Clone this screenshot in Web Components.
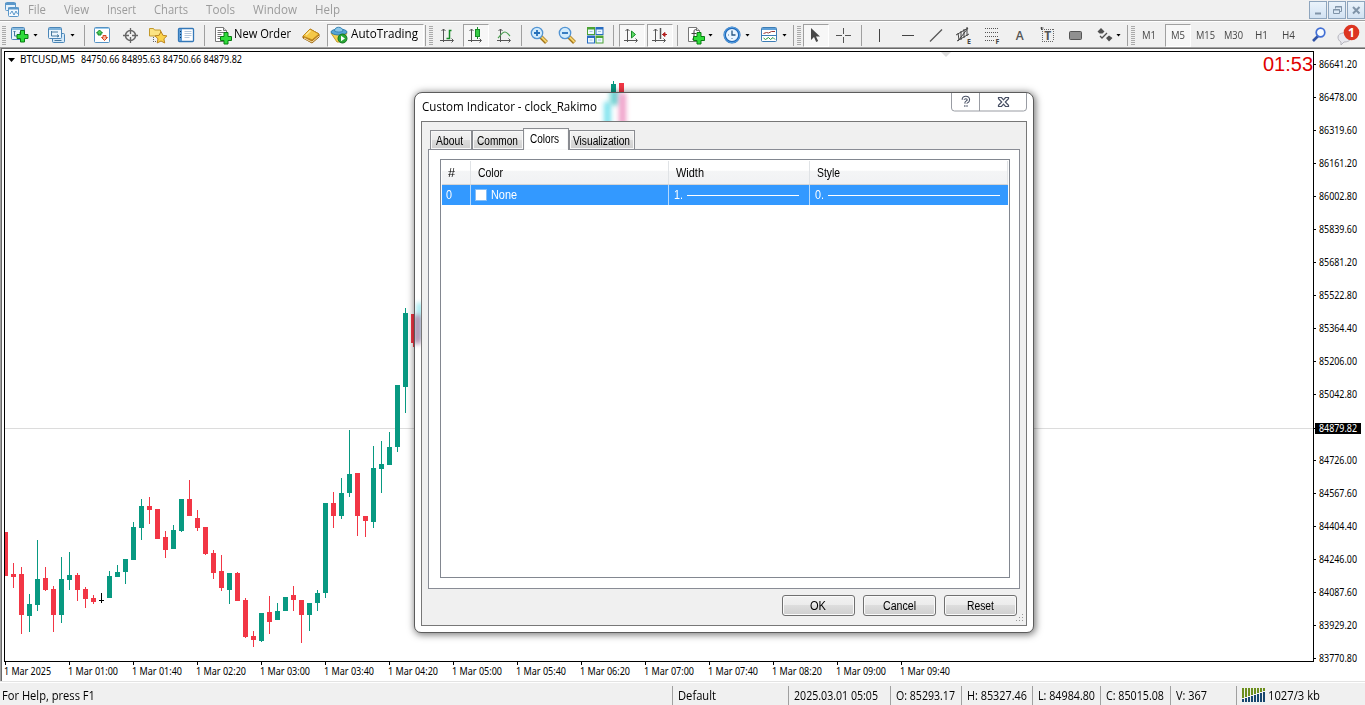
<!DOCTYPE html>
<html lang="en">
<head>
<meta charset="utf-8">
<title>BTCUSD,M5</title>
<style>
    html, body { margin: 0; height: 100%; overflow: hidden; }
    body { background: #f0f0f0; }
</style>
</head>
<body>
<trade-terminal></trade-terminal>

<script>
const UI = '"Open Sans", "Noto Sans", sans-serif';

const ADD = '<path d="M10.5 6.500h4v4h3.500v4h-3.500v3.500h-4v-3.500h-3.500v-4h3.500z" fill="#2fdc3a" stroke="#087c12" transform="translate(-.5 0)"/>';
const AXES = '<path d="M4.500 3v13M1 14.500h13M2.500 5l2-2 2 2M12.500 12.500l2 2-2 2" fill="none" stroke="#555"/>';
const PAGE = '<path d="M1.500 1.500h8l3 3v11h-11z" fill="#fff" stroke="#777"/><path d="M9.500 1.500v3h3" fill="#ddd" stroke="#777"/>';

const ICONS = {
    app: '<rect x="1.500" y="1.500" width="10" height="8" rx="1" fill="#e6f2fb" stroke="#5b97c9"/><path d="M1 3h11" stroke="#5b97c9" stroke-width="2"/><rect x="4.500" y="6.500" width="10" height="9" rx="1" fill="#f4faff" stroke="#5b97c9"/><path d="M4 7.500h11" stroke="#5b97c9" stroke-width="2"/><path d="M6 13l2-3 2 4 2-4 1.500 3" fill="none" stroke="#5b97c9"/>',
    chartAdd: '<rect x=".5" y="1.500" width="13" height="12" rx="1" fill="#eaf5fd" stroke="#4b86b8"/><path d="M1 3h12" stroke="#8abce0" stroke-width="2"/><path d="M3.500 5v5h7M2.500 6l1-1 1 1M9 6v3" fill="none" stroke="#44789f"/><g transform="translate(-.5 -2)">' + ADD + '</g>',
    profiles: '<rect x="4.500" y="7.500" width="12" height="9" rx="1" fill="#d5e9f8" stroke="#4b86b8"/><rect x=".5" y="1.500" width="13" height="11" rx="1" fill="#eaf5fd" stroke="#4b86b8"/><path d="M1 3h12" stroke="#7db2db" stroke-width="2"/><path d="M3.500 5v5h7M9 8.500l2 1.500-2 1M4 6h6M6.500 14.500h7" fill="none" stroke="#44789f"/>',
    market: '<rect x="1.500" y="1.500" width="15" height="15" rx="1" fill="#fff" stroke="#5592c4"/><path d="M2 2.500h14" stroke="#9acbed"/><path d="M6.500 4l3 3h-1.500v2h-3v-2h-1.500z" fill="#4cd05c" stroke="#16862a"/><path d="M11.500 14.500l-3-3h1.500v-2h3v2h1.500z" fill="#f9b49b" stroke="#d34720"/>',
    cross: '<circle cx="8.500" cy="9.500" r="5" fill="none" stroke="#666" stroke-width="1.500"/><path d="M8.500 2v6M8.500 11v6M1 9.500h6M10 9.500h6" stroke="#666" stroke-width="1.300"/>',
    folder: '<path d="M.5 2.500h4l1 1.500h6v6h-11z" fill="#fbe384" stroke="#c39a2c"/><path d="M4.500 11v6M6 15.500h3" stroke="#666" stroke-dasharray="1 1"/><path d="M12 5.500l1.900 3.800 4 .6-3 2.900.8 4.200-3.700-2-3.800 2 .8-4.200-3-2.900 4.100-.6z" fill="#fbd34b" stroke="#bd8621"/>',
    terminal: '<rect x="1.500" y="2.500" width="15" height="13" rx="1" fill="#fff" stroke="#3478b8" stroke-width="1.300"/><path d="M3.500 3v12" stroke="#5b9bd6" stroke-width="3"/><path d="M3 5.500h1M3 8.500h1M3 11.500h1" stroke="#0b355f"/><path d="M7.500 5.500h7M7.500 7.500h7M7.500 9.500h7M7.500 11.500h5" stroke="#b4c7da"/>',
    order: PAGE + '<path d="M3.500 4.500h4M3.500 6.500h7M3.500 8.500h4M3.500 10.500h3M3.500 12.500h3" stroke="#777"/>' + ADD,
    book: '<path d="M1 10l7-7c3 2 6 3 9 5v3l-7 6c-3-2-6-3-9-5z" fill="#b87812" stroke="#9b640e"/><path d="M1 10l7-7c3 2 6 3 9 5l-7 6c-3-2-6-2-9-4z" fill="#f5c847" stroke="#c28b1d"/><path d="M4 9l4.500-4.500" stroke="#ffe99b" stroke-width="1.500"/><path d="M2 12l8 4 7-6" fill="none" stroke="#f6e3ab"/>',
    auto: '<path d="M1 7l6 9h4l6-9z" fill="#f6d251" stroke="#c3992b"/><ellipse cx="9" cy="6" rx="8" ry="3" fill="#57a5d5" stroke="#2f7cad"/><path d="M4.500 5c0-5 8-5 8.500 0-2 1.500-6 1.500-8.500 0z" fill="#8bc8ea" stroke="#3985b4"/><circle cx="12.500" cy="12.500" r="4.500" fill="#28a634" stroke="#127320"/><path d="M11 9.800v5.400l4-2.700z" fill="#fff"/>',
    bars: AXES + '<path d="M7.500 12.500h3v-8h2" fill="none" stroke="#178b27" stroke-width="1.500"/>',
    candle: AXES + '<path d="M10.500 1v12" stroke="#178b27"/><rect x="8.500" y="3.500" width="4" height="7" fill="#35ca43" stroke="#178b27"/>',
    line: AXES + '<path d="M2 12c2-2 4-6 7-6 2 0 3 2 5 4" fill="none" stroke="#4a9d50" stroke-width="1.200"/>',
    zoomIn: '<path d="M10.500 10.500l6 6" stroke="#a37418" stroke-width="4"/><path d="M11 10.500l5.500 5.500" stroke="#f4d26d" stroke-width="2"/><circle cx="7" cy="7" r="5.700" fill="#d2ebfc" stroke="#5294d3" stroke-width="1.300"/><path d="M4 7h6M7 4v6" stroke="#2671bb" stroke-width="1.800"/>',
    zoomOut: '<path d="M10.500 10.500l6 6" stroke="#a37418" stroke-width="4"/><path d="M11 10.500l5.500 5.500" stroke="#f4d26d" stroke-width="2"/><circle cx="7" cy="7" r="5.700" fill="#d2ebfc" stroke="#5294d3" stroke-width="1.300"/><path d="M4 7h6" stroke="#2671bb" stroke-width="1.800"/>',
    tiles: '<rect x="1" y="1" width="8" height="8" fill="#4ba334"/><rect x="9.500" y="1" width="8" height="8" fill="#276cc0"/><rect x="1" y="9.500" width="8" height="8" fill="#276cc0"/><rect x="9.500" y="9.500" width="8" height="8" fill="#4ba334"/><path d="M2 3.500h6v4.500h-6zM10.500 3.500h6v4.500h-6zM2 12h6v4.500h-6zM10.500 12h6v4.500h-6z" fill="#eef7ff"/><path d="M3.500 5.500h3M12 5.500h3M3.500 14h3M12 14h3" stroke="#a2c6db"/>',
    scroll: AXES + '<path d="M8.500 5v7l4-3.500z" fill="#5fdc68" stroke="#178b27"/>',
    shift: AXES + '<path d="M9.500 2v11" stroke="#555" stroke-width="1.500"/><path d="M11.500 8.500h4.500M14 6.500v4l-2.500-2z" fill="#b11d1d" stroke="#b11d1d"/>',
    indicator: PAGE + '<path d="M9.500 4c-2-1-2.500 0-2.500 2v6c0 1-1 1.500-2 1M4.500 7.500h5" fill="none" stroke="#444"/>' + ADD,
    clock: '<circle cx="9" cy="9" r="7.300" fill="#eaf5ff" stroke="#1e68b9" stroke-width="2.500"/><circle cx="9" cy="9" r="7.700" fill="none" stroke="#69b1ed" stroke-width=".8"/><path d="M9 4.500v4.500h3.500" fill="none" stroke="#285782" stroke-width="1.300"/><path d="M5 9h.8M9 13v-.8" stroke="#285782"/>',
    template: '<rect x="1.500" y="1.500" width="15" height="14" rx="1" fill="#fff" stroke="#3d7db5"/><path d="M2 3h14" stroke="#5fa0d8" stroke-width="2"/><path d="M2 9.500h14" stroke="#3d7db5"/><path d="M3.500 7.500l3-1 2 .5 3-1.500h3.500" fill="none" stroke="#9a3a34"/><path d="M3.500 12l2 1.500 3-2 2 2 2.500-2 2 2" fill="none" stroke="#279239"/>',
    cursor: '<path d="M4 2v12l3-3 2.200 5 2-1-2.200-4.600h4z" fill="#484848"/>',
    hair: '<path d="M8.500 2v6M8.500 11v6M1 9.500h6M10 9.500h6" stroke="#555"/>',
    vline: '<path d="M9.500 3v13" stroke="#444"/>',
    hline: '<path d="M3 9.500h12" stroke="#444"/>',
    trend: '<path d="M3 15.500L15 3.500" stroke="#555" stroke-width="1.200"/>',
    channel: '<path d="M1 9l12-7M2 15l12-7M3 7l1 7M6 5l0 9M9 3l0 9M12 1l0 9M3 15L13 2" fill="none" stroke="#444"/><text x="12" y="17.500" font-size="7" font-weight="bold" fill="#444">E</text>',
    fibo: '<path d="M1 2.500h14M1 6.500h14M1 10.500h14M1 14.500h9" stroke="#555" stroke-dasharray="1 1"/><text x="11.500" y="18" font-size="7" font-weight="bold" fill="#444">F</text>',
    letter: '<text x="4.700" y="13.500" font-size="12" font-weight="600" fill="#555">A</text>',
    label: '<path d="M3 3.500h12M3 15.500h12M3.500 3v12M14.500 3v12" stroke="#666" stroke-dasharray="1 1"/><path d="M1.500 2h3M2.500 1v3" stroke="#444"/><text x="5.200" y="14" font-size="12" font-weight="bold" fill="#555">T</text>',
    rect: '<rect x="2.500" y="5.500" width="12" height="8" rx="1" fill="#909090" stroke="#555"/>',
    shapes: '<path d="M5 2l3.500 3.500L6.500 7.500h-3L1.500 5.500z M13 9.500l3.500 2.500-3.500 3.500-3-3.500z" fill="#505050"/><path d="M4 10l2 2 5-5" fill="none" stroke="#505050" stroke-width="1.300"/>',
    search: '<path d="M8 10l-5 5" stroke="#3153a5" stroke-width="2.600"/><circle cx="10.500" cy="6.500" r="4.300" fill="#f7fbff" stroke="#426fd5" stroke-width="1.700"/>'
};

// simple box: squeezes its text into the given width
class FitText extends HTMLElement {
    connectedCallback() {
        if (this.shadowRoot) return;
        this.attachShadow({ mode: 'open' });
        this.shadowRoot.innerHTML = `
            <style>
                :host { display: block; flex: none; }
                span { display: inline-block; white-space: pre; transform-origin: 0 50%; }
            </style>
            <span><slot></slot></span>
        `;
        const span = this.shadowRoot.querySelector('span');
        const w = Number(this.getAttribute('w'));
        const natural = span.getBoundingClientRect().width;
        this.style.width = w + 'px';
        if (natural) span.style.transform = `scaleX(${w / natural})`;
    }
}

class TermIcon extends HTMLElement {
    constructor() {
        super();
        this.attachShadow({ mode: 'open' });
    }

    connectedCallback() {
        this.shadowRoot.innerHTML = `
            <style>
                :host { display: block; width: 18px; height: 18px; flex: none; }
                svg { display: block; overflow: visible; font-family: ${UI}; }
            </style>
            <svg width="18" height="18" viewBox="0 0 18 18">${ICONS[this.getAttribute('name')] || ''}</svg>
        `;
    }
}

class MenuBar extends HTMLElement {
    constructor() {
        super();
        this.attachShadow({ mode: 'open' });
        this.shadowRoot.innerHTML = `
            <style>
                :host {
                    display: flex;
                    height: 20px;
                    box-sizing: border-box;
                    background: #f0f0f0;
                    font: 12px/20px ${UI};
                    color: #9b9b9b;
                }
                term-icon { margin: 1px 0 0 4px; }
                nav { display: flex; gap: 18px; padding-left: 6px; flex: 1; }
                .win { display: flex; gap: 1px; padding-top: 1px; }
                .win svg { border: 1px solid #8ea5bd; background: linear-gradient(#eaf3fb, #d2e2f2); }
            </style>
            <term-icon name="app"></term-icon>
            <nav>
                <fit-text w="18">File</fit-text>
                <fit-text w="25">View</fit-text>
                <fit-text w="29">Insert</fit-text>
                <fit-text w="34">Charts</fit-text>
                <fit-text w="29">Tools</fit-text>
                <fit-text w="44">Window</fit-text>
                <fit-text w="25">Help</fit-text>
            </nav>
            <div class="win">
                <svg width="16" height="16"><path d="M5 11.500h6" stroke="#8094a8" stroke-width="2"/></svg>
                <svg width="16" height="16"><path d="M6.500 6.500v-2h6v5h-2M4.500 7.500h6v4h-6zM6 5h7M4 8h7" fill="none" stroke="#8094a8"/></svg>
                <svg width="16" height="16"><path d="M5 5l6.500 6.500M11.500 5l-6.500 6.500" stroke="#8094a8" stroke-width="2"/></svg>
            </div>
        `;
    }
}

// [gap before, kind, name or text, text width]
const TOOLS = [
    [2, 'grip'], [5, 'icon', 'chartAdd'], [4, 'drop'], [10, 'icon', 'profiles'], [4, 'drop'], [9, 'sep'],
    [8, 'icon', 'market'], [11, 'icon', 'cross'], [9, 'icon', 'folder'], [10, 'icon', 'terminal'], [9, 'sep'],
    [9, 'icon', 'order'], [2, 'text', 'New Order', 57], [11, 'icon', 'book'], [7, 'auto', 'AutoTrading', 67], [1, 'sep'],
    [3, 'grip'], [6, 'icon', 'bars'], [6, 'down', 'candle'], [7, 'icon', 'line'], [7, 'sep'],
    [8, 'icon', 'zoomIn'], [10, 'icon', 'zoomOut'], [10, 'icon', 'tiles'], [9, 'sep'],
    [5, 'down', 'scroll'], [2, 'down', 'shift'], [4, 'sep'],
    [9, 'icon', 'indicator'], [3, 'drop'], [10, 'icon', 'clock'], [4, 'drop'], [10, 'icon', 'template'], [4, 'drop'], [6, 'sep'],
    [3, 'grip'], [2, 'down', 'cursor'], [6, 'icon', 'hair'], [8, 'sep'],
    [8, 'icon', 'vline'], [11, 'icon', 'hline'], [10, 'icon', 'trend'], [10, 'icon', 'channel'], [11, 'icon', 'fibo'],
    [9, 'icon', 'letter'], [10, 'icon', 'label'], [10, 'icon', 'rect'], [11, 'icon', 'shapes'], [2, 'drop'], [6, 'sep'],
    [3, 'grip'], [7, 'frame', 'M1', 14], [9, 'period', 'M5', 14], [5, 'frame', 'M15', 19], [9, 'frame', 'M30', 19],
    [12, 'frame', 'H1', 13], [14, 'frame', 'H4', 13], [15, 'icon', 'search'], [8, 'bubble', '1']
];

class ToolBar extends HTMLElement {
    constructor() {
        super();
        this.attachShadow({ mode: 'open' });
        this.shadowRoot.innerHTML = `
            <style>
                :host {
                    display: flex;
                    align-items: center;
                    height: 27px;
                    box-sizing: border-box;
                    border-top: 1px solid #a0a0a0;
                    box-shadow: inset 0 1px #fff;
                    background: #f0f0f0;
                    padding-top: 2px;
                    font: 12px/18px ${UI};
                    color: #000;
                }
                div { flex: none; box-sizing: border-box; display: flex; align-items: center; }
                .grip { width: 4px; height: 19px; background: repeating-linear-gradient(#aaa 0 1px, transparent 1px 2px); }
                .sep { width: 1px; height: 21px; background: #a0a0a0; }
                .drop { width: 5px; height: 3px; background: #000; clip-path: polygon(0 0, 100% 0, 50% 100%); }
                .down, .period, .auto {
                    height: 23px;
                    justify-content: center;
                    border: 1px solid #a0a0a0;
                    border-right-color: #fff;
                    border-bottom-color: #fff;
                    background: #f7f7f7;
                }
                .down, .period { width: 26px; }
                .auto { width: 97px; justify-content: flex-start; padding-left: 2px; gap: 3px; }
                .text fit-text, .auto fit-text { margin-top: -2px; }
                .frame, .period { font: 11px/18px ${UI}; color: #444; }
            </style>
        ` + TOOLS.map(([gap, kind, name, w]) => {
            let inner = '';
            if (kind === 'icon' || kind === 'down') inner = `<term-icon name="${name}"></term-icon>`;
            if (kind === 'auto') inner = '<term-icon name="auto"></term-icon>';
            if (w) inner += `<fit-text w="${w}">${name}</fit-text>`;
            if (kind === 'bubble') inner = `
                <svg width="26" height="22" viewBox="0 0 26 22">
                    <path d="M2 13c0-5 11-6 13 0 0 4-4 5-7 5l-3 3v-3c-2-1-3-3-3-5z" fill="#e8e8ee" stroke="#b5b5bd"/>
                    <circle cx="15.500" cy="8.500" r="7.800" fill="#dc3420"/>
                    <text x="15.500" y="13" text-anchor="middle" font-size="12" font-weight="bold" fill="#fff">1</text>
                </svg>`;
            return `<div class="${kind}" style="margin-left:${gap}px">${inner}</div>`;
        }).join('');
    }
}

// x, high, low, body top, body bottom, colour (g up, r down, k flat)
const CANDLES = [
    [5, 532, 576, 532, 576, 'r'], [13, 563, 588, 574, 577, 'r'], [21, 567, 634, 574, 615, 'r'],
    [29, 594, 632, 604, 616, 'g'], [37, 540, 611, 579, 605, 'g'], [45, 567, 591, 578, 590, 'r'],
    [53, 586, 632, 589, 615, 'r'], [61, 557, 623, 579, 615, 'g'], [69, 552, 590, 575, 580, 'g'],
    [77, 573, 601, 575, 590, 'r'], [85, 587, 608, 589, 599, 'r'], [93, 595, 604, 598, 602, 'r'],
    [101, 593, 603, 600, 601, 'k'], [109, 571, 598, 576, 598, 'g'], [117, 565, 577, 572, 577, 'g'],
    [125, 559, 584, 559, 572, 'g'], [133, 522, 560, 527, 560, 'g'], [141, 499, 540, 506, 528, 'g'],
    [149, 497, 524, 506, 510, 'r'], [157, 509, 539, 509, 539, 'r'], [165, 531, 558, 537, 550, 'r'],
    [173, 525, 549, 530, 549, 'g'], [181, 499, 532, 499, 531, 'g'], [189, 480, 516, 499, 516, 'r'],
    [197, 510, 531, 518, 528, 'r'], [205, 527, 555, 527, 554, 'r'], [213, 550, 579, 553, 573, 'r'],
    [221, 555, 591, 571, 588, 'r'], [229, 573, 604, 573, 590, 'g'], [237, 572, 601, 573, 601, 'r'],
    [245, 598, 638, 600, 637, 'r'], [253, 631, 647, 636, 640, 'r'], [261, 613, 642, 613, 641, 'g'],
    [269, 596, 634, 612, 622, 'r'], [277, 603, 620, 611, 620, 'g'], [285, 597, 611, 597, 611, 'g'],
    [293, 586, 611, 595, 600, 'r'], [301, 600, 643, 600, 615, 'r'], [309, 603, 631, 603, 615, 'g'],
    [317, 590, 611, 593, 603, 'g'], [325, 503, 598, 503, 593, 'g'], [333, 492, 528, 503, 516, 'r'],
    [341, 478, 519, 493, 516, 'g'], [349, 430, 497, 474, 493, 'g'], [357, 473, 536, 473, 516, 'r'],
    [365, 516, 537, 516, 521, 'r'], [373, 446, 528, 468, 522, 'g'], [381, 441, 493, 464, 469, 'g'],
    [389, 432, 465, 447, 465, 'g'], [397, 385, 452, 385, 447, 'g'], [405, 308, 413, 313, 387, 'g'],
    [413, 314, 347, 314, 343, 'r'], [613, 81, 110, 84, 110, 'g'], [621, 83, 120, 83, 120, 'r']
];
const PRICES = ['86641.20', '86478.00', '86319.60', '86161.20', '86002.80', '85839.60', '85681.20', '85522.80',
    '85364.40', '85206.00', '85042.80', '', '84726.00', '84567.60', '84404.40', '84246.00', '84087.60', '83929.20', '83770.80'];
const TIMES = ['2025', '01:00', '01:40', '02:20', '03:00', '03:40', '04:20', '05:00', '05:40', '06:20', '07:00', '07:40', '08:20', '09:00', '09:40'];

class PriceChart extends HTMLElement {
    constructor() {
        super();
        this.attachShadow({ mode: 'open' });
        const fill = { g: '#089981', r: '#f23645', k: '#000' };
        const fit = (x, y, w, text, color = '#000') =>
            `<text x="${x}" y="${y}" textLength="${w}" lengthAdjust="spacingAndGlyphs" fill="${color}">${text}</text>`;
        const candles = CANDLES.map(([x, hi, lo, top, bottom, c]) => {
            const left = Math.max(x - 2, 5);
            return `<rect x="${x}" y="${hi}" width="1" height="${lo - hi}" fill="${fill[c]}"/>
                <rect x="${left}" y="${top}" width="${x + 3 - left}" height="${bottom - top}" fill="${fill[c]}"/>`;
        }).join('');
        const prices = PRICES.map((p, i) => {
            const y = 64 + i * 33;
            return p && `<rect x="1314" y="${y}" width="2" height="1"/>` + fit(1319, y + 4, 38, p);
        }).join('');
        const times = TIMES.map((t, i) =>
            `<rect x="${5 + i * 64}" y="662" width="1" height="3"/>` + fit(4 + i * 64, 675, i ? 50 : 47, '1 Mar ' + t)
        ).join('');
        // the drawing keeps window coordinates, the pane starts at y = 47
        this.shadowRoot.innerHTML = `
            <style>
                :host { display: block; height: 636px; background: #fff; }
                svg { display: block; font: 10.500px "Noto Sans", sans-serif; }
                .clock { font: 20px "Liberation Sans", sans-serif; }
            </style>
            <svg width="1365" height="636" viewBox="0 47 1365 636" shape-rendering="crispEdges">
                <path d="M0 47h1365v1H0z" fill="#a0a0a0"/>
                <path d="M1 48h1364v1H1z" fill="#696969"/>
                <path d="M0 48h1v633H0z" fill="#a0a0a0"/>
                <path d="M1 48h1v633H1z" fill="#696969"/>
                <path d="M0 681h1365v1H0z" fill="#e3e3e3"/>
                <path d="M5 428h1308v1H5z" fill="#dcdcdc"/>
                ${candles}
                <path d="M4.500 662V51.500H1313.500V661.500H4" fill="none" stroke="#000"/>
                <path d="M941 52h10l-5 5z" fill="#dcdcdc" shape-rendering="auto"/>
                <path d="M8 58h7l-3.500 4z" shape-rendering="auto"/>
                ${fit(20, 63, 55, 'BTCUSD,M5')}
                ${fit(81, 63, 161, '84750.66 84895.63 84750.66 84879.82')}
                <text class="clock" x="1263" y="71" fill="#e00000">01:53</text>
                ${prices}
                <rect x="1315" y="423" width="46" height="11"/>
                <rect x="1313" y="428" width="3" height="1"/>
                ${fit(1319, 432, 38, '84879.82', '#fff')}
                ${times}
            </svg>
        `;
    }
}

class StatusBar extends HTMLElement {
    constructor() {
        super();
        this.attachShadow({ mode: 'open' });
        this.shadowRoot.innerHTML = `
            <style>
                :host {
                    display: grid;
                    grid-template-columns: 672px 116px 102px 71px 71px 68px 70px 66px 1fr;
                    height: 22px;
                    padding-top: 3px;
                    box-sizing: border-box;
                    background: #f0f0f0;
                    font: 12px/20px ${UI};
                    color: #000;
                }
                div { border-left: 1px solid #a0a0a0; padding-left: 5px; display: flex; gap: 3px; }
                div:first-of-type { border: 0; padding-left: 2px; }
                svg { margin-top: 2px; flex: none; }
            </style>
            <div><fit-text w="93">For Help, press F1</fit-text></div>
            <div><fit-text w="38">Default</fit-text></div>
            <div><fit-text w="84">2025.03.01 05:05</fit-text></div>
            <div><fit-text w="59">O: 85293.17</fit-text></div>
            <div><fit-text w="60">H: 85327.46</fit-text></div>
            <div><fit-text w="57">L: 84984.80</fit-text></div>
            <div><fit-text w="58">C: 85015.08</fit-text></div>
            <div><fit-text w="31">V: 367</fit-text></div>
            <div>
                <svg width="23" height="14">${[0, 1, 2, 3, 4, 5, 6, 7].map(i => `
                    <rect x="${i * 3}" y="0" width="2" height="${10 - i}" fill="#6b8e1c"/>
                    <rect x="${i * 3}" y="${11 - i}" width="2" height="${3 + i}" fill="#17466e"/>`).join('')}
                </svg>
                <fit-text w="52">1027/3 kb</fit-text>
            </div>
        `;
    }
}

class DialogTab extends HTMLElement {
    constructor() {
        super();
        this.attachShadow({ mode: 'open' });
        this.shadowRoot.innerHTML = `
            <style>
                :host {
                    display: block;
                    height: 19px;
                    box-sizing: border-box;
                    border: 1px solid #8a8c91;
                    border-bottom: 0;
                    line-height: 20px;
                    background: linear-gradient(#f3f3f3, #ebebeb 50%, #dcdcdc 50%, #cfcfcf);
                    box-shadow: inset 0 0 0 1px #f8f8f8;
                }
                :host([active]) { height: 22px; line-height: 20px; background: #fff; margin: 0 0 -1px -1px; position: relative; }
            </style>
            <slot></slot>
        `;
    }
}

class DialogButton extends HTMLElement {
    constructor() {
        super();
        this.attachShadow({ mode: 'open' });
        this.shadowRoot.innerHTML = `
            <style>
                :host {
                    display: flex;
                    justify-content: center;
                    width: 73px;
                    height: 21px;
                    box-sizing: border-box;
                    border: 1px solid #707070;
                    border-radius: 3px;
                    padding-right: 1px;
                    line-height: 20px;
                    background: linear-gradient(#f2f2f2, #ebebeb 50%, #dddddd 50%, #cfcfcf);
                    box-shadow: inset 0 0 0 1px #fafafa;
                }
            </style>
            <slot></slot>
        `;
    }
}

class ColorTable extends HTMLElement {
    constructor() {
        super();
        this.attachShadow({ mode: 'open' });
        this.shadowRoot.innerHTML = `
            <style>
                :host { display: block; border: 1px solid #828790; background: #fff; padding: 1px; box-sizing: border-box; }
                .row { display: grid; grid-template-columns: 29px 198px 141px 1fr; }
                .head { height: 23px; line-height: 24px; background: linear-gradient(#fff 40%, #f4f5f6 45%, #f1f2f4); border-bottom: 1px solid #d5d5d5; }
                .head div { border-right: 1px solid #e0e3e6; padding-left: 7px; height: 23px; }
                .head div:first-child { padding-left: 6px; }
                .sel { height: 20px; line-height: 20px; background: #3399ff; color: #fff; }
                .sel div { display: flex; align-items: center; gap: 4px; padding-left: 5px; border-right: 1px solid #b5d9fc; height: 20px; }
                .sel div:first-child { padding-left: 4px; }
                .sel div:last-child { border: 0; padding-right: 8px; }
                .sel div:nth-child(3) { padding-right: 10px; }
                i { width: 12px; height: 12px; background: #fff; outline: 1px solid #85bdf5; outline-offset: -1px; margin-left: -1px; }
                b { flex: 1; height: 1px; background: #fff; }
            </style>
            <div class="row head">
                <div><fit-text w="7">#</fit-text></div>
                <div><fit-text w="25">Color</fit-text></div>
                <div><fit-text w="28">Width</fit-text></div>
                <div><fit-text w="23">Style</fit-text></div>
            </div>
            <div class="row sel">
                <div><fit-text w="6">0</fit-text></div>
                <div><i></i><fit-text w="26">None</fit-text></div>
                <div><fit-text w="9">1.</fit-text><b></b></div>
                <div><fit-text w="9">0.</fit-text><b></b></div>
            </div>
        `;
    }
}

class IndicatorDialog extends HTMLElement {
    constructor() {
        super();
        this.attachShadow({ mode: 'open' });
        this.shadowRoot.innerHTML = `
            <style>
                :host {
                    display: flex;
                    flex-direction: column;
                    width: 620px;
                    height: 541px;
                    box-sizing: border-box;
                    border: 1px solid #5c5c5c;
                    border-radius: 8px 8px 7px 7px;
                    padding: 0 6px 6px;
                    background: #fff;
                    box-shadow: 1px 1px 7px 1px rgba(0, 0, 0, .5);
                    font: 12px/20px "Liberation Sans", sans-serif;
                    color: #000;
                    overflow: hidden;
                }
                header { display: flex; justify-content: space-between; height: 28px; flex: none; position: relative; }
                header fit-text { font: 12px/28px ${UI}; margin-left: 1px; position: relative; }
                .caps { display: block; margin-right: -1px; position: relative; }
                /* candles showing through the glass frame */
                .glow { position: absolute; filter: blur(2.500px); }
                .body { flex: 1; border: 1px solid #777; background: #f0f0f0; padding: 7px 6px 0; display: flex; flex-direction: column; position: relative; }
                .tabs { display: flex; align-items: flex-end; height: 20px; flex: none; padding-left: 2px; }
                .page { height: 440px; flex: none; box-sizing: border-box; border: 1px solid #898c95; background: #fff; padding: 9px 9px 10px 11px; }
                color-table { height: 419px; }
                footer { display: flex; justify-content: flex-end; gap: 8px; padding: 6px 3px 0 0; }
                .size { position: absolute; right: 2px; bottom: 2px; }
            </style>
            <header>
                <div class="glow" style="left:183px;top:9px;width:7px;height:24px;background:#7fe3ee"></div>
                <div class="glow" style="left:189px;top:-4px;width:9px;height:16px;background:#72d3d3"></div>
                <div class="glow" style="left:198px;top:0;width:7px;height:32px;background:#ef9fc8"></div>
                <div class="glow" style="left:-4px;top:210px;width:5px;height:36px;background:#8fe5ee"></div>
                <div class="glow" style="left:-7px;top:222px;width:7px;height:29px;background:#b090b0"></div>
                <fit-text w="175">Custom Indicator - clock_Rakimo</fit-text>
                <svg class="caps" width="77" height="20">
                    <path d="M.5 0v15q0 3 3 3h69q3 0 3-3V0M28.500 0v18" fill="none" stroke="#999ca3"/>
                    <path d="M12.300 6.800q0-2.300 2.500-2.300t2.600 2.200q0 1.500-1.500 2.200-1 .5-1 1.600M14.900 12.200v1.500" fill="none" stroke="#485064" stroke-width="3.400"/>
                    <path d="M12.300 6.800q0-2.300 2.500-2.300t2.600 2.200q0 1.500-1.500 2.200-1 .5-1 1.600M14.900 12.200v1.500" fill="none" stroke="#fff" stroke-width="1.300"/>
                    <path d="M47.500 4.500h3l2 2.400 2-2.400h3v1.200l-3.200 3.300 3.200 3.300v1.200h-3l-2-2.400-2 2.400h-3v-1.200l3.200-3.300-3.200-3.300z" fill="#fff" stroke="#485064" stroke-width="1.200"/>
                </svg>
            </header>
            <div class="body">
                <div class="tabs">
                    <dialog-tab style="width:42px;padding-left:5px"><fit-text w="27">About</fit-text></dialog-tab>
                    <dialog-tab style="width:52px;padding-left:4px"><fit-text w="41">Common</fit-text></dialog-tab>
                    <dialog-tab active style="width:46px;padding-left:6px"><fit-text w="29">Colors</fit-text></dialog-tab>
                    <dialog-tab style="width:66px;padding-left:3px"><fit-text w="57">Visualization</fit-text></dialog-tab>
                </div>
                <div class="page"><color-table></color-table></div>
                <footer>
                    <dialog-button><fit-text w="16">OK</fit-text></dialog-button>
                    <dialog-button><fit-text w="33">Cancel</fit-text></dialog-button>
                    <dialog-button><fit-text w="27">Reset</fit-text></dialog-button>
                </footer>
                <svg class="size" width="9" height="9"><path d="M7 0h1v1H7zM4 3h1v1H4zM7 3h1v1H7zM1 6h1v1H1zM4 6h1v1H4zM7 6h1v1H7z" fill="#999"/></svg>
            </div>
        `;
    }
}

class TradeTerminal extends HTMLElement {
    constructor() {
        super();
        this.attachShadow({ mode: 'open' });
        this.shadowRoot.innerHTML = `
            <style>
                :host { display: flex; flex-direction: column; width: 1365px; height: 705px; position: relative; overflow: hidden; }
                indicator-dialog { position: absolute; left: 414px; top: 92px; }
            </style>
            <menu-bar></menu-bar>
            <tool-bar></tool-bar>
            <price-chart></price-chart>
            <status-bar></status-bar>
            <indicator-dialog></indicator-dialog>
        `;
    }
}

customElements.define('trade-terminal', TradeTerminal);
customElements.define('menu-bar', MenuBar);
customElements.define('tool-bar', ToolBar);
customElements.define('price-chart', PriceChart);
customElements.define('status-bar', StatusBar);
customElements.define('indicator-dialog', IndicatorDialog);
customElements.define('dialog-tab', DialogTab);
customElements.define('dialog-button', DialogButton);
customElements.define('color-table', ColorTable);
customElements.define('term-icon', TermIcon);
// last, so every host already has its font when the text is measured
customElements.define('fit-text', FitText);
</script>
</body>
</html>
